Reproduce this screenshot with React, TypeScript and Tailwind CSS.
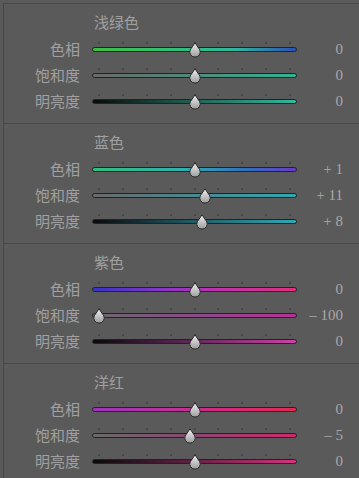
import React from "react";

type Row = { label: string; value: string; v: number; track: string };
type Section = { title: string; rows: Row[] };

const sections: Section[] = [
  {
    title: "浅绿色",
    rows: [
      { label: "色相", value: "0", v: 0, track: "bg-[linear-gradient(to_right,#3fbf3f,#2fc07a_40%,#2fb8a0_70%,#2b4fb5)]" },
      { label: "饱和度", value: "0", v: 0, track: "bg-[linear-gradient(to_right,#6a6a6a,#4f8a7c_50%,#2fb592)]" },
      { label: "明亮度", value: "0", v: 0, track: "bg-[linear-gradient(to_right,#0a0a0a,#1f5a4e_45%,#32b8a0)]" },
    ],
  },
  {
    title: "蓝色",
    rows: [
      { label: "色相", value: "+ 1", v: 1, track: "bg-[linear-gradient(to_right,#2fc07e,#2fb0b0_45%,#2f70c0_75%,#6a3ac8)]" },
      { label: "饱和度", value: "+ 11", v: 11, track: "bg-[linear-gradient(to_right,#6a6a6a,#4a8890_50%,#2fa8b0)]" },
      { label: "明亮度", value: "+ 8", v: 8, track: "bg-[linear-gradient(to_right,#0a0a0a,#1e5560_45%,#30a8b5)]" },
    ],
  },
  {
    title: "紫色",
    rows: [
      { label: "色相", value: "0", v: 0, track: "bg-[linear-gradient(to_right,#3535c8,#8a35c8_35%,#c030b0_60%,#e03080)]" },
      { label: "饱和度", value: "– 100", v: -100, track: "bg-[linear-gradient(to_right,#6a6a6a,#8a4a88_50%,#b83098)]" },
      { label: "明亮度", value: "0", v: 0, track: "bg-[linear-gradient(to_right,#0a0a0a,#5a2555_45%,#d040a8)]" },
    ],
  },
  {
    title: "洋红",
    rows: [
      { label: "色相", value: "0", v: 0, track: "bg-[linear-gradient(to_right,#a032c0,#c0309a_40%,#d82870_75%,#e02850)]" },
      { label: "饱和度", value: "– 5", v: -5, track: "bg-[linear-gradient(to_right,#6a6a6a,#8a4870_50%,#d02868)]" },
      { label: "明亮度", value: "0", v: 0, track: "bg-[linear-gradient(to_right,#0a0a0a,#5a2040_45%,#d83080)]" },
    ],
  },
];

const TICKS = [0, 1, 2, 3, 4, 5, 6, 7, 8];
const cjk = { fontFamily: '"Noto Sans CJK SC", sans-serif' };

function Thumb() {
  return (
    <svg width="14" height="16" viewBox="0 0 14 16">
      <defs>
        <linearGradient id="tg" x1="0" y1="0" x2="0" y2="1">
          <stop offset="0" stopColor="#f0f0f0" />
          <stop offset="1" stopColor="#9c9c9c" />
        </linearGradient>
      </defs>
      <path d="M7 0.8 L11.8 7.9 A5.2 5.2 0 1 1 2.2 7.9 Z" fill="url(#tg)" stroke="#2a2a2a" strokeWidth="1" />
    </svg>
  );
}

function Slider({ v, track }: { v: number; track: string }) {
  // thumb centre runs from 7px to 198px inside the 205px track
  const x = 7 + ((v + 100) / 200) * 191;
  return (
    <div className="relative flex h-[26px] w-[205px] flex-col pt-[6px]">
      <div className="flex h-[2px] justify-between px-[6px]">
        {TICKS.map((t) => (
          <span key={t} className="h-[2px] w-[2px] bg-[#454545]" />
        ))}
      </div>
      <div className={`mt-[3px] h-[5px] rounded-full border border-[#222] ${track}`} />
      <div className="absolute top-[6px]" style={{ left: x - 7 }}>
        <Thumb />
      </div>
    </div>
  );
}

export default function App() {
  return (
    <div className="h-[478px] w-[359px] overflow-hidden bg-[#5a5a5a] pl-[3px] pt-[3px]">
      <div className="border-l border-[#474747]">
        {sections.map((s) => (
          <div key={s.title} className="flex h-[120px] flex-col gap-[4px] border-t border-[#484848] pt-[8px] pb-[9px]">
            <div className="h-[20px] pl-[90px] text-[15px] leading-[20px] text-[#a0a0a0]" style={cjk}>
              {s.title}
            </div>
            <div className="flex flex-col">
              {s.rows.map((r) => (
                <div key={r.label} className="flex h-[26px] items-center gap-[12px]">
                  <div className="w-[76px] text-right text-[15px] leading-[26px] text-[#a0a0a0]" style={cjk}>
                    {r.label}
                  </div>
                  <Slider v={r.v} track={r.track} />
                  <div className="-ml-[12px] w-[46px] text-right font-['Liberation_Serif',serif] text-[15px] leading-[26px] text-[#a8a8a8]">
                    {r.value}
                  </div>
                </div>
              ))}
            </div>
          </div>
        ))}
      </div>
    </div>
  );
}
